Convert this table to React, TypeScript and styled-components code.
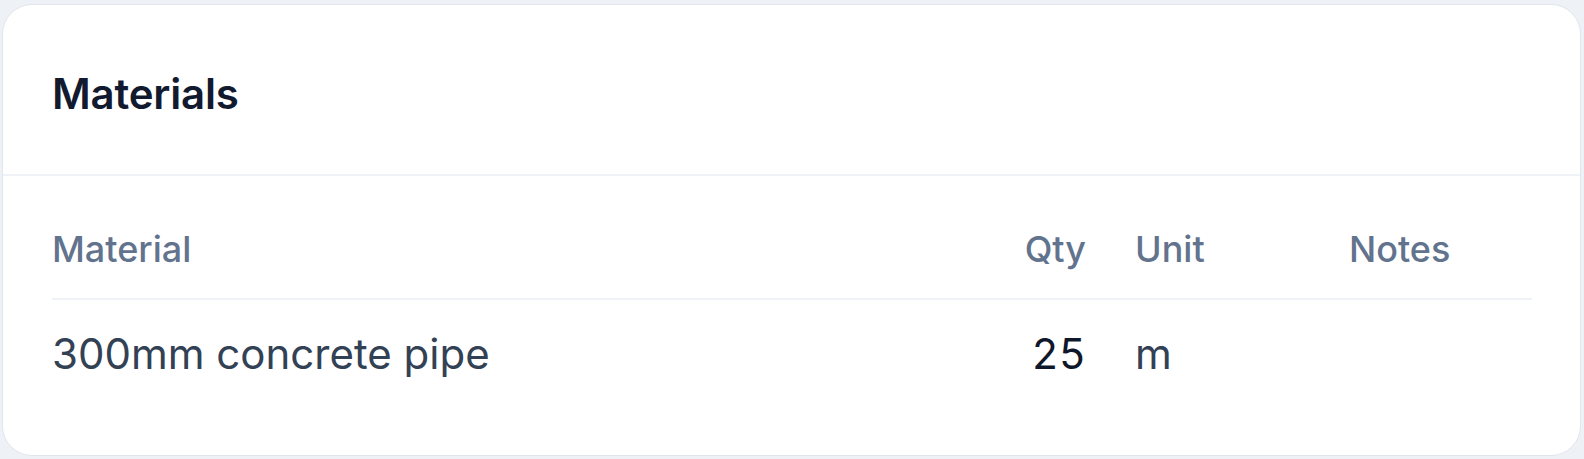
import React from "react";
import styled, { createGlobalStyle } from "styled-components";

const GlobalStyle = createGlobalStyle`
  html, body {
    margin: 0;
    padding: 0;
    background: #eef1f5;
  }
  body {
    font-family: Inter, "Noto Sans", "Liberation Sans", sans-serif;
    -webkit-font-smoothing: antialiased;
  }
`;

const Page = styled.div`
  padding: 4px 3px 3px 2px;
`;

const Card = styled.section`
  background: #ffffff;
  border: 1px solid #e1e6ed;
  border-radius: 30px;
  overflow: hidden;
`;

const CardHeader = styled.header`
  padding: 64px 49px 55px;
  border-bottom: 2px solid #eff3f7;
`;

const Title = styled.h2`
  margin: 0;
  font-size: 42px;
  line-height: 50px;
  font-weight: 600;
  color: #111a2e;
  letter-spacing: -0.2px;
`;

const CardBody = styled.div`
  padding: 25px 48px 46px 49px;
`;

const Row = styled.div<{ $head?: boolean }>`
  display: grid;
  grid-template-columns: 1fr 160px 214px 183px;
  align-items: baseline;
  border-bottom: ${(p) => (p.$head ? "2px solid #eff3f7" : "none")};
`;

const Cell = styled.div<{ $head?: boolean; $align?: "left" | "right"; $tone?: "strong" | "normal" }>`
  padding: ${(p) => (p.$head ? "26px 0 27px" : "29px 0 30px")};
  padding-right: ${(p) => (p.$align === "right" ? "49px" : "0")};
  text-align: ${(p) => p.$align ?? "left"};
  font-size: ${(p) => (p.$head ? "36px" : "42px")};
  line-height: ${(p) => (p.$head ? "44px" : "50px")};
  font-weight: ${(p) => (p.$head ? 500 : 400)};
  color: ${(p) => (p.$head ? "#62738d" : p.$tone === "strong" ? "#0f172a" : "#334155")};
  font-variant-numeric: ${(p) => (p.$align === "right" ? "tabular-nums" : "normal")};
`;

const materials = [{ name: "300mm concrete pipe", qty: 25, unit: "m", notes: "" }];

export default function App() {
  return (
    <>
      <GlobalStyle />
      <Page>
        <Card>
          <CardHeader>
            <Title>Materials</Title>
          </CardHeader>
          <CardBody>
            <Row $head>
              <Cell $head>Material</Cell>
              <Cell $head $align="right">Qty</Cell>
              <Cell $head>Unit</Cell>
              <Cell $head>Notes</Cell>
            </Row>
            {materials.map((m) => (
              <Row key={m.name}>
                <Cell>{m.name}</Cell>
                <Cell $align="right" $tone="strong">{m.qty}</Cell>
                <Cell>{m.unit}</Cell>
                <Cell>{m.notes}</Cell>
              </Row>
            ))}
          </CardBody>
        </Card>
      </Page>
    </>
  );
}
